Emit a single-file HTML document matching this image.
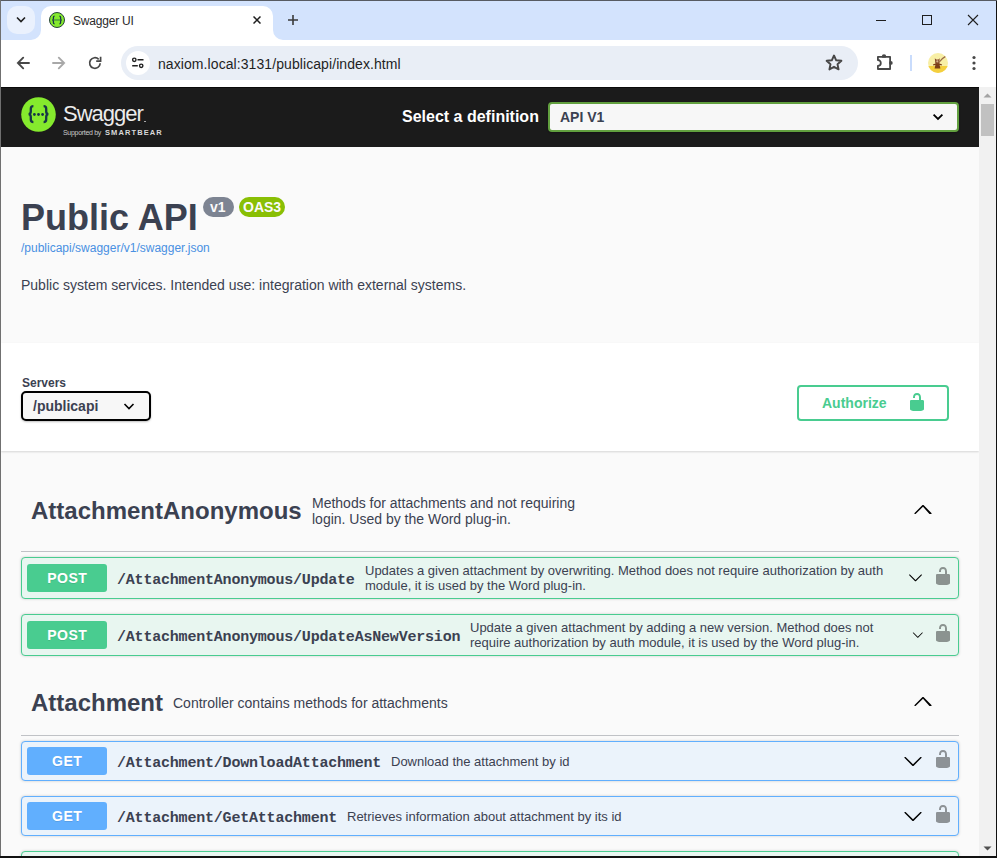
<!DOCTYPE html>
<html><head><meta charset="utf-8">
<style>
*{box-sizing:border-box;margin:0;padding:0}
html,body{width:997px;height:858px;overflow:hidden;background:#000;font-family:"Liberation Sans",sans-serif}
.abs{position:absolute}
#frame{position:absolute;left:0;top:0;width:997px;height:858px;background:#111}
#tabstrip{position:absolute;left:1px;top:1px;width:995px;height:39px;background:#d3e3fd}
#bt{position:absolute;left:0;top:0;width:997px;height:1px;background:#575b62}
#bl{position:absolute;left:0;top:0;width:1px;height:856px;background:#707070}
#toolbar{position:absolute;left:1px;top:40px;width:995px;height:47px;background:#fff}
#omni{position:absolute;left:121px;top:46px;width:737px;height:34px;border-radius:17px;background:#e9eef6}
#page{position:absolute;left:1px;top:87px;width:978px;height:769px;background:#fafafa;overflow:hidden}
#sb{position:absolute;left:979px;top:87px;width:17px;height:769px;background:#f1f1f1}
#wr{position:absolute;left:995px;top:40px;width:1px;height:816px;background:#fff}
#wb{position:absolute;left:1px;top:855px;width:995px;height:1px;background:#fff}
.txt{white-space:nowrap;color:#3b4151}
.opb{position:absolute;left:20px;width:938px;border-radius:4px;box-shadow:0 0 3px rgba(0,0,0,.19)}
.post{background:#e8f6f0;border:1px solid #49cc90}
.get{background:#ebf3fb;border:1px solid #61affe}
.meth{position:absolute;left:5px;width:80px;height:28px;border-radius:3px;color:#fff;font-weight:bold;font-size:14px;text-align:center;letter-spacing:0.5px;text-indent:0.5px;line-height:28px;text-shadow:0 1px 0 rgba(0,0,0,.1)}
.post .meth{background:#49cc90}
.get .meth{background:#61affe}
.path{position:absolute;left:95px;font-family:"Liberation Mono",monospace;font-weight:bold;font-size:15px;letter-spacing:-0.2px;color:#3b4151;white-space:nowrap}
.desc{position:absolute;font-size:13px;color:#3b4151;line-height:15px}
.tag{position:absolute;left:20px;width:938px;border-bottom:1px solid rgba(59,65,81,.3)}
.tagname{position:absolute;left:10px;font-size:24px;font-weight:bold;color:#3b4151;white-space:nowrap}
.tagdesc{position:absolute;font-size:14px;color:#3b4151;line-height:16px}
</style></head><body>
<div id="frame">
  <div id="tabstrip"></div><div id="bt"></div><div id="bl"></div>
  <!-- tab dropdown -->
  <div class="abs" style="left:7px;top:6px;width:28px;height:28px;border-radius:10px;background:#eaf1fd"></div>
  <svg class="abs" style="left:7px;top:6px" width="28" height="28"><path d="M10 11.5l4 4 4-4" fill="none" stroke="#1f1f1f" stroke-width="1.6"/></svg>
  <!-- active tab -->
  <svg class="abs" style="left:31px;top:6px" width="252" height="34"><path d="M0 34 A10 10 0 0 0 10 24 V10 A10 10 0 0 1 20 0 H232 A10 10 0 0 1 242 10 V24 A10 10 0 0 0 252 34 Z" fill="#fff"/></svg>
  <svg class="abs" style="left:49px;top:12px" width="16" height="16"><circle cx="8" cy="8" r="7.5" fill="#85ea2d" stroke="#26433a" stroke-width="1"/><path d="M5.6 4.2c-1 0-1.2.6-1.2 1.4v1.2c0 .6-.4 1.1-1 1.2.6.1 1 .6 1 1.2v1.2c0 .8.2 1.4 1.2 1.4M10.4 4.2c1 0 1.2.6 1.2 1.4v1.2c0 .6.4 1.1 1 1.2-.6.1-1 .6-1 1.2v1.2c0 .8-.2 1.4-1.2 1.4" fill="none" stroke="#173647" stroke-width="1.3"/><path d="M5 8h6" stroke="#4a9a3a" stroke-width="1.4"/></svg>
  <div class="abs txt" style="left:73px;top:13.5px;font-size:12px;color:#2a2a2a;letter-spacing:-0.2px">Swagger UI</div>
  <svg class="abs" style="left:253px;top:16px" width="8" height="8"><path d="M0.5 0.5l7 7M7.5 0.5l-7 7" stroke="#1f1f1f" stroke-width="1.5"/></svg>
  <svg class="abs" style="left:287px;top:14px" width="12" height="12"><path d="M6 1v10M1 6h10" stroke="#3a3a3a" stroke-width="1.6"/></svg>
  <!-- window controls -->
  <div class="abs" style="left:876px;top:20px;width:10px;height:1px;background:#1f1f1f"></div>
  <div class="abs" style="left:922px;top:15px;width:10px;height:10px;border:1px solid #1f1f1f"></div>
  <svg class="abs" style="left:967px;top:14px" width="12" height="12"><path d="M1 1l10 10M11 1l-10 10" stroke="#1f1f1f" stroke-width="1.1"/></svg>

  <div id="toolbar"></div>
  <svg class="abs" style="left:15px;top:55px" width="16" height="16"><path d="M14 8H3M8.2 2.7L2.9 8l5.3 5.3" fill="none" stroke="#474747" stroke-width="1.9" stroke-linecap="round"/></svg>
  <svg class="abs" style="left:51px;top:55px" width="16" height="16"><path d="M2 8h11M7.8 2.7L13.1 8l-5.3 5.3" fill="none" stroke="#a8a8a8" stroke-width="1.9" stroke-linecap="round"/></svg>
  <svg class="abs" style="left:87px;top:55px" width="16" height="16"><path d="M13.2 8.3A5.3 5.3 0 1 1 11.7 4.3" fill="none" stroke="#474747" stroke-width="1.7"/><path d="M13.6 1.8v4.4H9.2" fill="none" stroke="#474747" stroke-width="1.7"/></svg>
  <div id="omni"></div>
  <div class="abs" style="left:126px;top:51px;width:24px;height:24px;border-radius:12px;background:#fff"></div>
  <svg class="abs" style="left:130px;top:55px" width="16" height="16"><circle cx="4.3" cy="4.8" r="1.7" fill="none" stroke="#1f1f1f" stroke-width="1.4"/><path d="M7.5 4.8h6M2.2 10.8h5.6" stroke="#1f1f1f" stroke-width="1.6"/><circle cx="11.2" cy="10.8" r="1.7" fill="none" stroke="#1f1f1f" stroke-width="1.4"/></svg>
  <div class="abs txt" style="left:158px;top:56px;font-size:14px;color:#1f1f1f;letter-spacing:0.08px">naxiom.local:3131/publicapi/index.html</div>
  <svg class="abs" style="left:825px;top:54px" width="18" height="17"><path d="M9 1.5l2.2 4.8 5.2.5-3.9 3.5 1.1 5.1L9 12.8l-4.6 2.6 1.1-5.1-3.9-3.5 5.2-.5z" fill="none" stroke="#474747" stroke-width="1.9" stroke-linejoin="round"/></svg>
  <svg class="abs" style="left:874px;top:50px" width="20" height="20"><circle cx="10" cy="6.4" r="2.2" fill="#474747"/><circle cx="16.8" cy="12.9" r="1.9" fill="#474747"/><rect x="4.8" y="7.7" width="10.4" height="10.4" fill="#fff"/><path d="M3.9 6.8H16.1V19H3.9V15.8A2.9 2.9 0 0 0 3.9 10Z" fill="none" stroke="#474747" stroke-width="1.8" stroke-linejoin="round"/></svg>
  <div class="abs" style="left:910px;top:55px;width:2px;height:16px;background:#c9dcfc"></div>
  <svg class="abs" style="left:928px;top:53px" width="20" height="20"><defs><clipPath id="cc"><circle cx="10" cy="10" r="10"/></clipPath></defs><g clip-path="url(#cc)"><rect width="20" height="20" fill="#f8efa6"/><rect y="13" width="20" height="7" fill="#f4cf3e"/><path d="M6.6 15.4L7.9 9.6h3.2l1.3 5.8z" fill="#7b3f17"/><path d="M5.2 11.8l2.8-.6M11 11.2l2.8.6" stroke="#7b3f17" stroke-width="1.2"/><path d="M7.3 10.6L6.8 5.3 8.3 6.6h2l1.4-1.3-.4 5.3z" fill="#8a5030"/><circle cx="9.3" cy="8.3" r="1.1" fill="#d2b08a"/><path d="M10.8 9.5Q13.5 5.5 17.6 3.4" fill="none" stroke="#9a6a45" stroke-width="1.2"/></g></svg>
  <svg class="abs" style="left:971px;top:55px" width="6" height="16"><circle cx="3" cy="2.5" r="1.6" fill="#474747"/><circle cx="3" cy="8" r="1.6" fill="#474747"/><circle cx="3" cy="13.5" r="1.6" fill="#474747"/></svg>

  <div id="page">
    <!-- topbar -->
    <div class="abs" style="left:0;top:0;width:978px;height:60px;background:#1b1b1b;border-top:1px solid #0a0a0a"></div>
    <svg class="abs" style="left:20px;top:10px" width="35" height="35" viewBox="0 0 35 35"><circle cx="17.5" cy="17.5" r="17.3" fill="#85ea2d"/><path d="M12.4 9.2c-1.9 0-2.6 1-2.6 2.6v2.7c0 1.3-.7 2.4-2 2.7 1.3.3 2 1.4 2 2.7v2.7c0 1.6.7 2.6 2.6 2.6M22.6 9.2c1.9 0 2.6 1 2.6 2.6v2.7c0 1.3.7 2.4 2 2.7-1.3.3-2 1.4-2 2.7v2.7c0 1.6-.7 2.6-2.6 2.6" fill="none" stroke="#173647" stroke-width="2.3"/><circle cx="13.4" cy="17.5" r="1.4" fill="#173647"/><circle cx="17.5" cy="17.5" r="1.4" fill="#173647"/><circle cx="21.6" cy="17.5" r="1.4" fill="#173647"/></svg>
    <div class="abs txt" style="left:62px;top:14px;font-size:22px;color:#ececec;letter-spacing:-1px">Swagger</div>
    <div class="abs" style="left:143px;top:34px;width:2px;height:1px;background:#aaa"></div>
    <div class="abs txt" style="left:62px;top:42px;font-size:7px;color:#c8c8c8;letter-spacing:-0.3px">Supported by</div>
    <div class="abs txt" style="left:104px;top:41px;font-size:7.5px;font-weight:bold;color:#d8d8d8;letter-spacing:1.1px">SMARTBEAR</div>
    <div class="abs txt" style="left:401px;top:21px;font-size:16px;font-weight:bold;color:#fff">Select a definition</div>
    <div class="abs" style="left:547px;top:15px;width:411px;height:30px;border:2px solid #62a03f;border-radius:4px;background:#f7f7f7;box-shadow:0 1px 2px rgba(0,0,0,.25)"></div>
    <div class="abs txt" style="left:559px;top:22px;font-size:14px;font-weight:bold">API V1</div>
    <svg class="abs" style="left:929px;top:21px" width="16" height="16"><path d="M3.6 6.6l4.4 4.4 4.4-4.4" fill="none" stroke="#000" stroke-width="1.8"/></svg>

    <!-- info -->
    <div class="abs txt" style="left:20px;top:110px;font-size:36px;font-weight:bold;line-height:42px">Public API</div>
    <div class="abs" style="left:202px;top:110px;width:31px;height:20px;border-radius:57px;background:#7d8492"></div>
    <div class="abs txt" style="left:209px;top:112px;font-size:14px;font-weight:bold;color:#fafafa">v1</div>
    <div class="abs" style="left:238px;top:110px;width:46px;height:20px;border-radius:57px;background:#89bf04"></div>
    <div class="abs txt" style="left:242px;top:112px;font-size:14px;font-weight:bold;color:#fafafa">OAS3</div>
    <div class="abs txt" style="left:20px;top:154px;font-size:12px;color:#4990e2">/publicapi/swagger/v1/swagger.json</div>
    <div class="abs txt" style="left:20px;top:190px;font-size:14px">Public system services. Intended use: integration with external systems.</div>

    <!-- scheme container -->
    <div class="abs" style="left:0;top:256px;width:978px;height:108px;background:#fff;box-shadow:0 1px 2px 0 rgba(0,0,0,.15)"></div>
    <div class="abs txt" style="left:21px;top:289px;font-size:12px;font-weight:bold">Servers</div>
    <div class="abs" style="left:20px;top:304px;width:130px;height:30px;border:2px solid #000;border-radius:5px;background:#f7f7f7;box-shadow:0 1px 2px 0 rgba(0,0,0,.25)"></div>
    <div class="abs txt" style="left:32px;top:311px;font-size:14px;font-weight:bold">/publicapi</div>
    <svg class="abs" style="left:120px;top:311px" width="16" height="16"><path d="M3.5 6l4.5 4.5L12.5 6" fill="none" stroke="#000" stroke-width="1.6"/></svg>
    <div class="abs" style="left:796px;top:298px;width:152px;height:36px;border:2px solid #49cc90;border-radius:4px"></div>
    <div class="abs txt" style="left:821px;top:308px;font-size:14px;font-weight:bold;color:#49cc90">Authorize</div>
    <svg class="abs" style="left:906px;top:305px" width="20" height="20" viewBox="0 0 20 20"><path fill="#49cc90" d="M15.8 8H14V5.6C14 2.703 12.665 1 10 1 7.334 1 6 2.703 6 5.6V6h2v-.801C8 3.754 8.501 3 10 3c1.498 0 2 .754 2 2.199V8H4c-.553 0-1 .646-1 1.199V17c0 .549.428 1.139.951 1.307l1.197.387C5.672 18.861 6.55 19 7.1 19h5.8c.549 0 1.428-.139 1.951-.307l1.196-.387c.524-.167.953-.757.953-1.306V9.199C17 8.646 16.352 8 15.8 8z"/></svg>

    <!-- tag 1 -->
    <div class="tag" style="top:400px;height:65px"></div>
    <div class="abs txt" style="left:30px;top:410px;font-size:24px;font-weight:bold;line-height:28px">AttachmentAnonymous</div>
    <div class="tagdesc abs" style="left:311px;top:408px;width:275px">Methods for attachments and not requiring login. Used by the Word plug-in.</div>
    <svg class="abs" style="left:912px;top:412px" width="20" height="20" viewBox="0 0 20 20"><path d="M17.418 14.908c-.272.268-.709.268-.979 0L10 7.767 2.582 14.908c-.271.268-.709.268-.979 0s-.271-.701 0-.969l7.908-7.83c.27-.268.707-.268.979 0l7.908 7.83c.27.268.27.701 0 .969z"/></svg>

    <div class="opb post" style="top:470px;height:42px">
      <div class="meth" style="top:6px">POST</div>
      <div class="path" style="top:14px">/AttachmentAnonymous/Update</div>
      <div class="desc" style="left:343px;top:5px;width:530px">Updates a given attachment by overwriting. Method does not require authorization by auth module, it is used by the Word plug-in.</div>
      <svg class="abs" style="left:886px;top:12px" width="15" height="15" viewBox="0 0 20 20"><path d="M17.418 6.109c.272-.268.709-.268.979 0s.271.701 0 .969l-7.908 7.83c-.27.268-.707.268-.979 0l-7.908-7.83c-.27-.268-.27-.701 0-.969.271-.268.709-.268.979 0L10 13.25l7.418-7.141z"/></svg>
      <svg class="abs" style="left:911px;top:8px" width="20" height="20" viewBox="0 0 20 20"><path fill="#000" fill-opacity=".4" d="M15.8 8H14V5.6C14 2.703 12.665 1 10 1 7.334 1 6 2.703 6 5.6V6h2v-.801C8 3.754 8.501 3 10 3c1.498 0 2 .754 2 2.199V8H4c-.553 0-1 .646-1 1.199V17c0 .549.428 1.139.951 1.307l1.197.387C5.672 18.861 6.55 19 7.1 19h5.8c.549 0 1.428-.139 1.951-.307l1.196-.387c.524-.167.953-.757.953-1.306V9.199C17 8.646 16.352 8 15.8 8z"/></svg>
    </div>
    <div class="opb post" style="top:527px;height:42px">
      <div class="meth" style="top:6px">POST</div>
      <div class="path" style="top:14px">/AttachmentAnonymous/UpdateAsNewVersion</div>
      <div class="desc" style="left:448px;top:5px;width:420px">Update a given attachment by adding a new version. Method does not require authorization by auth module, it is used by the Word plug-in.</div>
      <svg class="abs" style="left:889.5px;top:14px" width="11.6" height="11.6" viewBox="0 0 20 20"><path d="M17.418 6.109c.272-.268.709-.268.979 0s.271.701 0 .969l-7.908 7.83c-.27.268-.707.268-.979 0l-7.908-7.83c-.27-.268-.27-.701 0-.969.271-.268.709-.268.979 0L10 13.25l7.418-7.141z"/></svg>
      <svg class="abs" style="left:911px;top:8px" width="20" height="20" viewBox="0 0 20 20"><path fill="#000" fill-opacity=".4" d="M15.8 8H14V5.6C14 2.703 12.665 1 10 1 7.334 1 6 2.703 6 5.6V6h2v-.801C8 3.754 8.501 3 10 3c1.498 0 2 .754 2 2.199V8H4c-.553 0-1 .646-1 1.199V17c0 .549.428 1.139.951 1.307l1.197.387C5.672 18.861 6.55 19 7.1 19h5.8c.549 0 1.428-.139 1.951-.307l1.196-.387c.524-.167.953-.757.953-1.306V9.199C17 8.646 16.352 8 15.8 8z"/></svg>
    </div>

    <!-- tag 2 -->
    <div class="tag" style="top:600px;height:49px"></div>
    <div class="abs txt" style="left:30px;top:602px;font-size:24px;font-weight:bold;line-height:28px">Attachment</div>
    <div class="abs txt" style="left:172px;top:608px;font-size:14px">Controller contains methods for attachments</div>
    <svg class="abs" style="left:912px;top:604px" width="20" height="20" viewBox="0 0 20 20"><path d="M17.418 14.908c-.272.268-.709.268-.979 0L10 7.767 2.582 14.908c-.271.268-.709.268-.979 0s-.271-.701 0-.969l7.908-7.83c.27-.268.707-.268.979 0l7.908 7.83c.27.268.27.701 0 .969z"/></svg>

    <div class="opb get" style="top:654px;height:40px">
      <div class="meth" style="top:5px">GET</div>
      <div class="path" style="top:13px">/Attachment/DownloadAttachment</div>
      <div class="desc" style="left:369px;top:12px;width:400px;white-space:nowrap">Download the attachment by id</div>
      <svg class="abs" style="left:881px;top:9px" width="20" height="20" viewBox="0 0 20 20"><path d="M17.418 6.109c.272-.268.709-.268.979 0s.271.701 0 .969l-7.908 7.83c-.27.268-.707.268-.979 0l-7.908-7.83c-.27-.268-.27-.701 0-.969.271-.268.709-.268.979 0L10 13.25l7.418-7.141z"/></svg>
      <svg class="abs" style="left:911px;top:7px" width="20" height="20" viewBox="0 0 20 20"><path fill="#000" fill-opacity=".4" d="M15.8 8H14V5.6C14 2.703 12.665 1 10 1 7.334 1 6 2.703 6 5.6V6h2v-.801C8 3.754 8.501 3 10 3c1.498 0 2 .754 2 2.199V8H4c-.553 0-1 .646-1 1.199V17c0 .549.428 1.139.951 1.307l1.197.387C5.672 18.861 6.55 19 7.1 19h5.8c.549 0 1.428-.139 1.951-.307l1.196-.387c.524-.167.953-.757.953-1.306V9.199C17 8.646 16.352 8 15.8 8z"/></svg>
    </div>
    <div class="opb get" style="top:709px;height:40px">
      <div class="meth" style="top:5px">GET</div>
      <div class="path" style="top:13px">/Attachment/GetAttachment</div>
      <div class="desc" style="left:325px;top:12px;width:400px;white-space:nowrap">Retrieves information about attachment by its id</div>
      <svg class="abs" style="left:881px;top:9px" width="20" height="20" viewBox="0 0 20 20"><path d="M17.418 6.109c.272-.268.709-.268.979 0s.271.701 0 .969l-7.908 7.83c-.27.268-.707.268-.979 0l-7.908-7.83c-.27-.268-.27-.701 0-.969.271-.268.709-.268.979 0L10 13.25l7.418-7.141z"/></svg>
      <svg class="abs" style="left:911px;top:7px" width="20" height="20" viewBox="0 0 20 20"><path fill="#000" fill-opacity=".4" d="M15.8 8H14V5.6C14 2.703 12.665 1 10 1 7.334 1 6 2.703 6 5.6V6h2v-.801C8 3.754 8.501 3 10 3c1.498 0 2 .754 2 2.199V8H4c-.553 0-1 .646-1 1.199V17c0 .549.428 1.139.951 1.307l1.197.387C5.672 18.861 6.55 19 7.1 19h5.8c.549 0 1.428-.139 1.951-.307l1.196-.387c.524-.167.953-.757.953-1.306V9.199C17 8.646 16.352 8 15.8 8z"/></svg>
    </div>
    <div class="opb post" style="top:764px;height:42px"></div>
  </div>
  <!-- scrollbar -->
  <div id="sb"></div>
  <svg class="abs" style="left:979px;top:87px" width="17" height="17"><path d="M4.5 10.5h8l-4-4z" fill="#a3a3a3"/></svg>
  <div class="abs" style="left:981px;top:104px;width:13px;height:32px;background:#c1c1c1"></div>
  <svg class="abs" style="left:979px;top:840px" width="17" height="17"><path d="M4.5 6.5h8l-4 4z" fill="#505050"/></svg>
</div>
</body></html>
